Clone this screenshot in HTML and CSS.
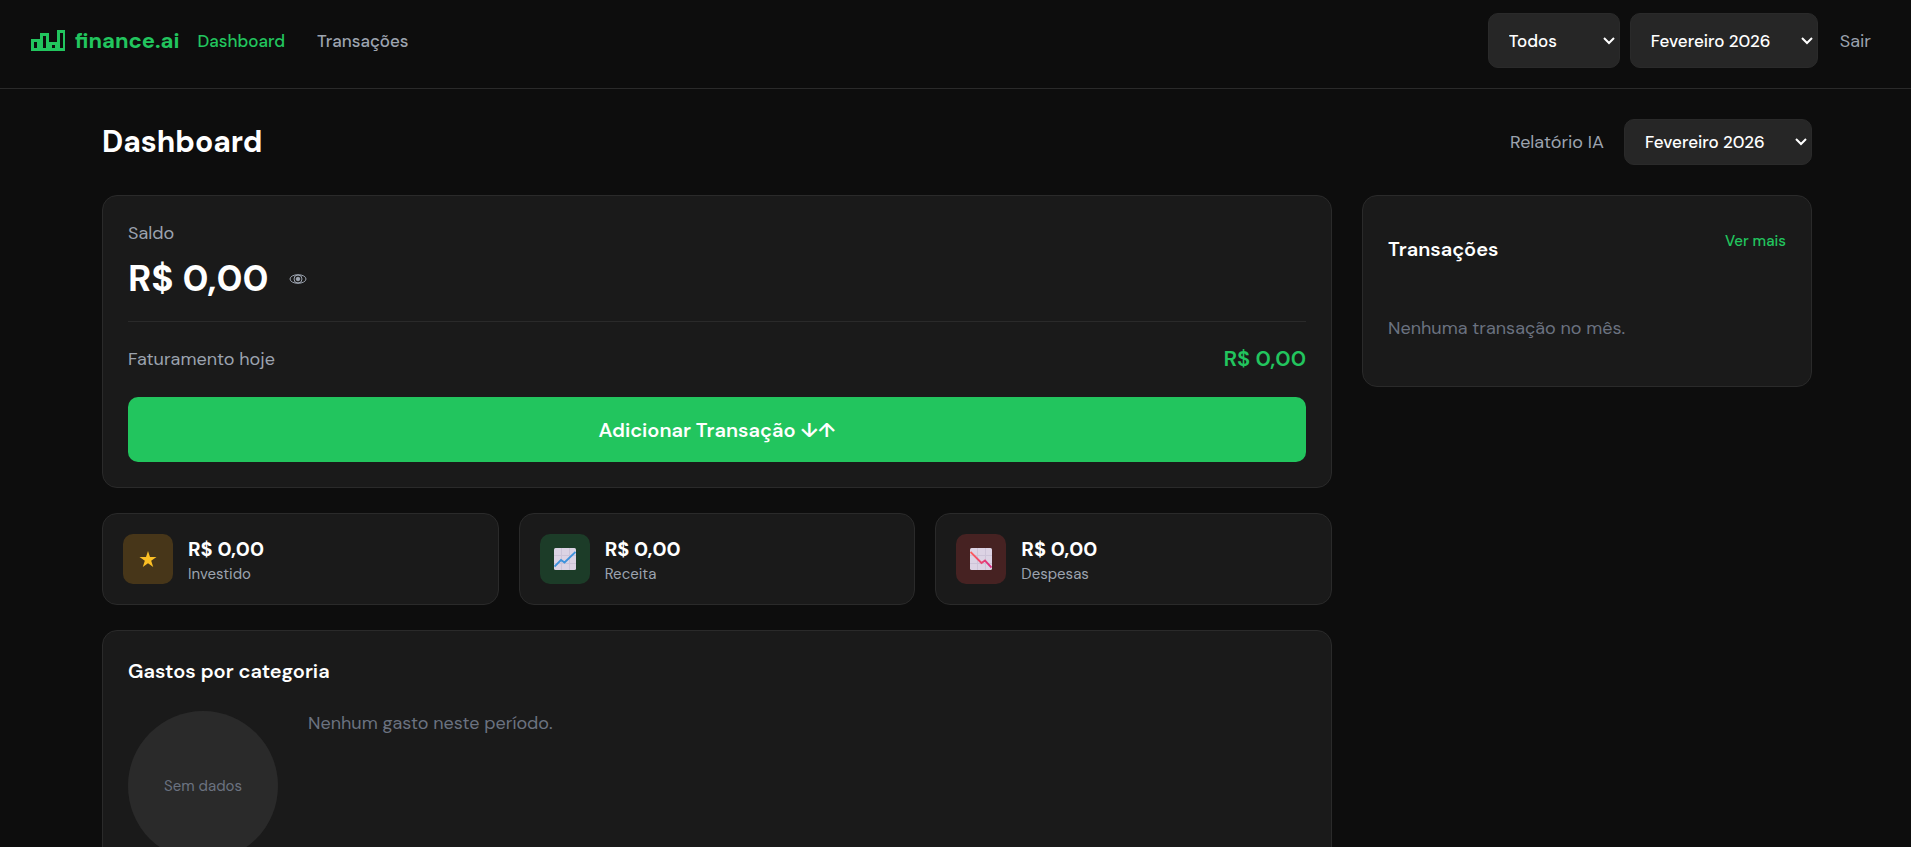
FILE: index.html
```
<!DOCTYPE html>
<html lang="pt-BR">
<head>
    <meta charset="UTF-8">
    <meta name="viewport" content="width=device-width, initial-scale=1.0">
    <title>finance.ai - Dashboard</title>
    <link rel="stylesheet" href="styles.css">
</head>
<body>
    <header class="header">
        <a class="logo" href="#">
            <svg class="logo-icon" viewBox="0 0 34 21" aria-hidden="true">
                <path fill-rule="evenodd" d="M0 9H9V3H18V12H26V0H34V21H0ZM3 12V18H6V12ZM12 6V18H15V6ZM21 15V18H24V15ZM29 3V18H32V3Z"/>
            </svg>
            <span>finance.ai</span>
        </a>
        <nav class="nav">
            <a class="active" href="#">Dashboard</a>
            <a href="#">Transações</a>
        </nav>
        <div class="header-actions">
            <select class="select select-tall select-account" aria-label="Conta">
                <option>Todos</option>
            </select>
            <select class="select select-tall" aria-label="Mês">
                <option>Fevereiro 2026</option>
            </select>
            <button class="btn-text" type="button">Sair</button>
        </div>
    </header>

    <main class="main">
        <div class="page-header">
            <h1>Dashboard</h1>
            <div class="page-actions">
                <a class="report-link" href="#">Relatório IA</a>
                <select class="select" aria-label="Mês do relatório">
                    <option>Fevereiro 2026</option>
                </select>
            </div>
        </div>

        <div class="grid">
            <div class="column">
                <section class="card balance">
                    <p class="label">Saldo</p>
                    <div class="balance-row">
                        <strong class="balance-value">R$ 0,00</strong>
                        <button class="btn-eye" type="button" aria-label="Ocultar saldo">
                            <svg viewBox="0 0 18 10" aria-hidden="true">
                                <ellipse cx="9" cy="5" rx="8" ry="4.300"/>
                                <circle cx="9" cy="5" r="4"/>
                                <circle class="pupil" cx="9" cy="5" r="1.800"/>
                            </svg>
                        </button>
                    </div>
                    <div class="revenue">
                        <span class="label">Faturamento hoje</span>
                        <strong class="revenue-value">R$ 0,00</strong>
                    </div>
                    <button class="btn-primary" type="button">Adicionar Transação ↓↑</button>
                </section>

                <div class="stats">
                    <div class="card stat">
                        <div class="stat-icon invested">
                            <svg viewBox="0 0 22 22" aria-hidden="true">
                                <path fill="#fbbf24" d="M11 3L13 9H19.500L14.200 12.700L16.200 19L11 15.200L5.800 19L7.800 12.700L2.500 9H9Z"/>
                            </svg>
                        </div>
                        <div class="stat-text">
                            <strong>R$ 0,00</strong>
                            <span>Investido</span>
                        </div>
                    </div>
                    <div class="card stat">
                        <div class="stat-icon income">
                            <svg viewBox="0 0 22 22" aria-hidden="true">
                                <rect width="22" height="22" rx="1.500" fill="#dcd3e4"/>
                                <path d="M7.500 0V22M15.500 0V22M0 7.500H22M0 15.500H22" stroke="#cdc4d8"/>
                                <path d="M0.500 18.500L7 12L10.500 14.500L21.500 4" fill="none" stroke="#3f93dc" stroke-width="1.900"/>
                            </svg>
                        </div>
                        <div class="stat-text">
                            <strong>R$ 0,00</strong>
                            <span>Receita</span>
                        </div>
                    </div>
                    <div class="card stat">
                        <div class="stat-icon expense">
                            <svg viewBox="0 0 22 22" aria-hidden="true">
                                <defs>
                                    <linearGradient id="fall">
                                        <stop offset="0" stop-color="#ff5f5a"/>
                                        <stop offset="1" stop-color="#d92c86"/>
                                    </linearGradient>
                                </defs>
                                <rect width="22" height="22" rx="1.500" fill="#dcd3e4"/>
                                <path d="M7.500 0V22M15.500 0V22M0 7.500H22M0 15.500H22" stroke="#cdc4d8"/>
                                <path d="M0.500 4L11.500 15L15 12.500L21.500 19.500" fill="none" stroke="url(#fall)" stroke-width="1.900"/>
                            </svg>
                        </div>
                        <div class="stat-text">
                            <strong>R$ 0,00</strong>
                            <span>Despesas</span>
                        </div>
                    </div>
                </div>

                <section class="card categories">
                    <h2>Gastos por categoria</h2>
                    <div class="categories-body">
                        <div class="donut">Sem dados</div>
                        <p class="empty">Nenhum gasto neste período.</p>
                    </div>
                </section>
            </div>

            <aside class="card transactions">
                <div class="transactions-header">
                    <h2>Transações</h2>
                    <a href="#">Ver mais</a>
                </div>
                <p class="empty">Nenhuma transação no mês.</p>
            </aside>
        </div>
    </main>
</body>
</html>
```
FILE: styles.css
```
* {
    box-sizing: border-box;
}
body {
    margin: 0;
    background-color: #0d0d0d;
    color: #fff;
    font-family: "DM Sans", Inter, sans-serif;
    font-size: 18px;
    line-height: 24px;
}
h1, h2, p {
    margin: 0;
}
a {
    color: inherit;
    text-decoration: none;
}
button {
    padding: 0;
    border: none;
    background: none;
    color: inherit;
    font: inherit;
    cursor: pointer;
}
h2 {
    font-size: 20px;
    font-weight: 600;
    line-height: 30px;
}

/* Header */
.header {
    display: flex;
    align-items: center;
    padding: 13px 40px 20px 31px;
    border-bottom: 1px solid #2a2a2a;
}
.logo {
    display: flex;
    align-items: center;
    gap: 10px;
    color: #22c55e;
    font-size: 22px;
    font-weight: 700;
}
.logo-icon {
    width: 34px;
    height: 21px;
    fill: currentColor;
}
.nav {
    display: flex;
    gap: 32px;
    margin-left: 18px;
    color: #9ca3af;
    font-size: 17px;
    font-weight: 500;
}
.nav .active {
    color: #22c55e;
}
.header-actions {
    display: flex;
    align-items: center;
    gap: 10px;
    margin-left: auto;
}
.select {
    appearance: none;
    width: 188px;
    height: 46px;
    padding: 0 20px;
    border: 1px solid #2a2a2a;
    border-radius: 10px;
    background: #262626 url("data:image/svg+xml,%3Csvg xmlns='http://www.w3.org/2000/svg' width='12' height='8' fill='none' stroke='white' stroke-width='2'%3E%3Cpath d='M1 1l5 5 5-5'/%3E%3C/svg%3E") no-repeat right 4px center;
    color: #fff;
    font: inherit;
    font-size: 17px;
    font-weight: 500;
}
.select-tall {
    height: 55px;
}
.select-account {
    width: 132px;
}
.btn-text {
    margin-left: 12px;
    color: #9ca3af;
}

/* Page */
.main {
    padding: 30px 99px 30px 102px;
}
.page-header {
    display: flex;
    align-items: center;
    justify-content: space-between;
    margin-bottom: 30px;
}
.page-header h1 {
    font-size: 30px;
    font-weight: 700;
}
.page-actions {
    display: flex;
    align-items: center;
    gap: 20px;
}
.report-link, .label {
    color: #9ca3af;
}
.grid {
    display: grid;
    grid-template-columns: minmax(0, 1fr) 450px;
    align-items: start;
    gap: 30px;
}
.column {
    display: grid;
    gap: 25px;
}
.card {
    padding: 25px;
    border: 1px solid #2a2a2a;
    border-radius: 15px;
    background-color: #1a1a1a;
}
.empty {
    color: #6b7280;
}

/* Balance */
.balance-row {
    display: flex;
    align-items: center;
    gap: 20px;
    height: 66px;
    margin-bottom: 10px;
}
.balance-value {
    font-size: 37px;
    font-weight: 700;
}
.btn-eye {
    width: 18px;
    padding-top: 2px;
}
.btn-eye svg {
    display: block;
    width: 18px;
    height: 10px;
    fill: none;
    stroke: #9ca3af;
}
.btn-eye .pupil {
    fill: #9ca3af;
}
.revenue {
    display: flex;
    align-items: center;
    justify-content: space-between;
    height: 76px;
    padding-bottom: 2px;
    border-top: 1px solid #2a2a2a;
}
.revenue-value {
    color: #22c55e;
    font-size: 22px;
    font-weight: 600;
}
.btn-primary {
    display: block;
    width: 100%;
    height: 65px;
    border-radius: 10px;
    background-color: #22c55e;
    color: #fff;
    font-size: 20px;
    font-weight: 600;
}

/* Stats */
.stats {
    display: grid;
    grid-template-columns: repeat(3, 1fr);
    gap: 20px;
}
.stat {
    display: flex;
    align-items: center;
    gap: 15px;
    height: 92px;
    padding: 20px;
}
.stat-text {
    display: grid;
    gap: 1px;
    padding-top: 4px;
}
.stat strong {
    font-size: 20px;
    font-weight: 700;
}
.stat span {
    color: #9ca3af;
    font-size: 15px;
}
.stat-icon {
    display: grid;
    place-items: center;
    width: 50px;
    height: 50px;
    border-radius: 10px;
}
.stat-icon svg {
    width: 22px;
    height: 22px;
}
.invested {
    background-color: #473619;
}
.income {
    background-color: #1c3c28;
}
.expense {
    background-color: #462222;
}

/* Categories */
.categories-body {
    display: flex;
    gap: 30px;
    margin-top: 25px;
}
.donut {
    display: grid;
    place-items: center;
    width: 150px;
    height: 150px;
    border-radius: 50%;
    background-color: #2a2a2a;
    color: #6b7280;
    font-size: 15px;
}

/* Transactions */
.transactions-header {
    display: flex;
    align-items: flex-start;
    justify-content: space-between;
    padding-top: 8px;
}
.transactions-header h2 {
    padding: 5px 0 52px;
}
.transactions-header a {
    color: #22c55e;
    font-size: 15px;
    font-weight: 500;
}
.transactions .empty {
    padding-bottom: 21px;
}
```
